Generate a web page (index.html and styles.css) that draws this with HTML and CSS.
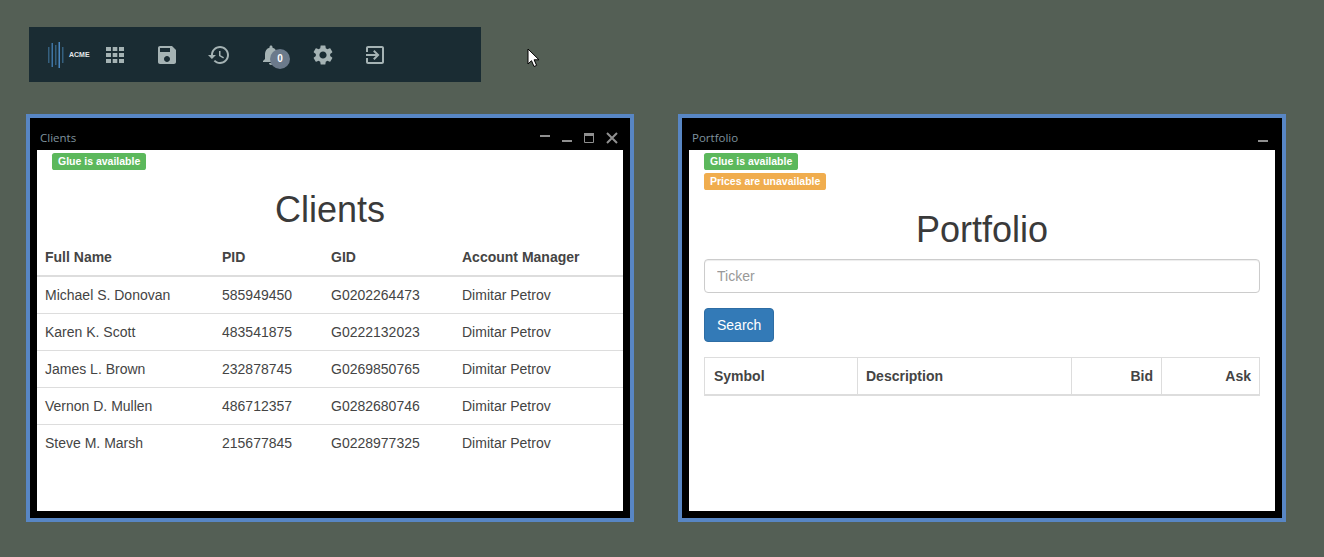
FILE: index.html
```html
<!DOCTYPE html>
<html>

<head>
    <title>Desktop</title>
    <link rel="stylesheet" href="styles.css">
</head>

<body>
    <div class="toolbar">
        <div class="logo">
            <svg class="logoBars" width="17" height="26" viewBox="0 0 17 26">
                <rect x="0" y="5" width="1.500" height="16" fill="#35607f"/>
                <rect x="3.500" y="1" width="1.500" height="24" fill="#3f75a5"/>
                <rect x="7" y="3" width="1.500" height="20" fill="#35607f"/>
                <rect x="10.500" y="0" width="1.500" height="26" fill="#4a86c0"/>
                <rect x="14" y="5" width="1.500" height="16" fill="#35607f"/>
            </svg>
            <span class="logoText">ACME</span>
        </div>
        <div class="icones">
            <svg class="icone" viewBox="0 0 24 24"><path d="M3 4h5v4H3zM9.700 4h4.600v4H9.700zM16 4h5v4h-5zM3 10h5v4H3zM9.700 10h4.600v4H9.700zM16 10h5v4h-5zM3 16h5v4H3zM9.700 16h4.600v4H9.700zM16 16h5v4h-5z"/></svg>
            <svg class="icone" viewBox="0 0 24 24"><path d="M17 3H5c-1.110 0-2 .9-2 2v14c0 1.100.89 2 2 2h14c1.100 0 2-.9 2-2V7l-4-4zm-5 16c-1.660 0-3-1.340-3-3s1.340-3 3-3 3 1.340 3 3-1.340 3-3 3zm3-10H5V5h10v4z"/></svg>
            <svg class="icone" viewBox="0 0 24 24"><path d="M13 3c-4.970 0-9 4.030-9 9H1l3.890 3.890.07.14L9 12H6c0-3.870 3.130-7 7-7s7 3.130 7 7-3.130 7-7 7c-1.930 0-3.680-.79-4.940-2.060l-1.420 1.420C8.270 19.990 10.510 21 13 21c4.970 0 9-4.030 9-9s-4.030-9-9-9zm-1 5v5l4.280 2.540.72-1.210-3.500-2.080V8H12z"/></svg>
            <div class="sino">
                <svg class="icone" viewBox="0 0 24 24"><path d="M12 22c1.100 0 2-.9 2-2h-4c0 1.100.89 2 2 2zm6-6v-5c0-3.070-1.640-5.640-4.500-6.320V4c0-.83-.67-1.500-1.500-1.500s-1.500.67-1.500 1.500v.68C7.630 5.360 6 7.920 6 11v5l-2 2v1h16v-1l-2-2z"/></svg>
                <span class="contador">0</span>
            </div>
            <svg class="icone" viewBox="0 0 24 24"><path d="M19.140 12.940c.04-.3.06-.61.06-.94 0-.32-.02-.64-.07-.94l2.030-1.580c.18-.14.23-.41.12-.61l-1.920-3.320c-.12-.22-.37-.29-.59-.22l-2.390.96c-.5-.38-1.030-.7-1.620-.94l-.36-2.540c-.04-.24-.24-.41-.48-.41h-3.840c-.24 0-.43.17-.47.41l-.36 2.540c-.59.24-1.130.57-1.620.94l-2.390-.96c-.22-.08-.47 0-.59.22L2.740 8.870c-.12.21-.08.47.12.61l2.030 1.580c-.05.3-.09.63-.09.94s.02.64.07.94l-2.030 1.580c-.18.14-.23.41-.12.61l1.920 3.320c.12.22.37.29.59.22l2.390-.96c.5.38 1.030.7 1.620.94l.36 2.540c.05.24.24.41.48.41h3.840c.24 0 .44-.17.47-.41l.36-2.540c.59-.24 1.130-.56 1.620-.94l2.390.96c.22.08.47 0 .59-.22l1.920-3.320c.12-.22.07-.47-.12-.61l-2.010-1.580zM12 15.600c-1.980 0-3.600-1.620-3.600-3.600s1.620-3.600 3.600-3.600 3.600 1.620 3.600 3.600-1.620 3.600-3.600 3.600z"/></svg>
            <svg class="icone" viewBox="0 0 24 24"><path d="M10.090 15.590L11.500 17l5-5-5-5-1.410 1.410L12.670 11H3v2h9.670l-2.580 2.590zM19 3H5c-1.110 0-2 .9-2 2v4h2V5h14v14H5v-4H3v4c0 1.100.89 2 2 2h14c1.100 0 2-.9 2-2V5c0-1.100-.9-2-2-2z"/></svg>
        </div>
    </div>

    <svg class="cursor" width="13" height="20" viewBox="0 0 13 20">
        <path d="M1 1v15l3.500-3.300 2.500 5.800 2.600-1.100-2.500-5.600h4.900z" fill="#fff" stroke="#000" stroke-width="1"/>
    </svg>

    <div class="janela janelaClientes">
        <div class="tituloJanela">
            <span class="nomeJanela">Clients</span>
            <div class="botoesJanela">
                <svg width="12" height="12" viewBox="0 0 12 12"><rect x="1" y="3" width="10" height="2" fill="#8f8f8f"/></svg>
                <svg width="12" height="12" viewBox="0 0 12 12"><rect x="1" y="8" width="10" height="2" fill="#8f8f8f"/></svg>
                <svg width="12" height="12" viewBox="0 0 12 12"><path d="M1.500 1.500h9v9h-9z" fill="none" stroke="#8f8f8f"/><rect x="1" y="1" width="10" height="3" fill="#8f8f8f"/></svg>
                <svg width="14" height="12" viewBox="0 0 14 12"><path d="M2 1l10 10M12 1L2 11" stroke="#8f8f8f" stroke-width="2" fill="none"/></svg>
            </div>
        </div>
        <div class="conteudo">
            <div class="etiquetas etiquetasClientes">
                <span class="etiqueta verde">Glue is available</span>
            </div>
            <h1>Clients</h1>
            <table class="tabelaClientes">
                <thead>
                    <tr>
                        <th class="colNome">Full Name</th>
                        <th class="colPid">PID</th>
                        <th class="colGid">GID</th>
                        <th>Account Manager</th>
                    </tr>
                </thead>
                <tbody>
                    <tr><td>Michael S. Donovan</td><td>585949450</td><td>G0202264473</td><td>Dimitar Petrov</td></tr>
                    <tr><td>Karen K. Scott</td><td>483541875</td><td>G0222132023</td><td>Dimitar Petrov</td></tr>
                    <tr><td>James L. Brown</td><td>232878745</td><td>G0269850765</td><td>Dimitar Petrov</td></tr>
                    <tr><td>Vernon D. Mullen</td><td>486712357</td><td>G0282680746</td><td>Dimitar Petrov</td></tr>
                    <tr><td>Steve M. Marsh</td><td>215677845</td><td>G0228977325</td><td>Dimitar Petrov</td></tr>
                </tbody>
            </table>
        </div>
    </div>

    <div class="janela janelaPortfolio">
        <div class="tituloJanela">
            <span class="nomeJanela">Portfolio</span>
            <div class="botoesJanela">
                <svg width="12" height="12" viewBox="0 0 12 12"><rect x="1" y="8" width="10" height="2" fill="#8f8f8f"/></svg>
            </div>
        </div>
        <div class="conteudo conteudoPortfolio">
            <div class="etiquetas">
                <span class="etiqueta verde">Glue is available</span>
                <span class="etiqueta laranja">Prices are unavailable</span>
            </div>
            <h1>Portfolio</h1>
            <input class="campoTicker" type="text" placeholder="Ticker">
            <button class="btnBusca">Search</button>
            <table class="tabelaPortfolio">
                <thead>
                    <tr>
                        <th class="colSimbolo">Symbol</th>
                        <th class="colDescricao">Description</th>
                        <th class="colBid">Bid</th>
                        <th class="colAsk">Ask</th>
                    </tr>
                </thead>
            </table>
        </div>
    </div>
</body>

</html>
```

FILE: styles.css
```css
* {
    box-sizing: border-box;
}

body {
    margin: 0;
    height: 557px;
    overflow: hidden;
    position: relative;
    background-color: #545f55;
    font-family: "Liberation Sans", Arial, sans-serif;
    font-size: 14px;
    color: #444;
}

/* barra de ferramentas */
.toolbar {
    position: absolute;
    left: 29px;
    top: 27px;
    width: 452px;
    height: 55px;
    background-color: #1a2c33;
    display: flex;
    align-items: center;
    padding-left: 19px;
}

.logo {
    display: flex;
    align-items: center;
    width: 55px;
}

.logoBars {
    display: block;
}

.logoText {
    margin-left: 4px;
    font-size: 7px;
    font-weight: bold;
    color: #e4e8ea;
}

.icones {
    display: flex;
    gap: 28px;
    align-items: center;
}

.icone {
    display: block;
    width: 24px;
    height: 24px;
    fill: #a5b3b4;
}

.sino {
    position: relative;
    width: 24px;
    height: 24px;
}

.contador {
    position: absolute;
    left: 11px;
    top: 6px;
    width: 20px;
    height: 20px;
    border-radius: 50%;
    background-color: #6b7a8b;
    color: #fff;
    font-size: 10px;
    font-weight: bold;
    line-height: 20px;
    text-align: center;
}

.cursor {
    position: absolute;
    left: 527px;
    top: 48px;
}

/* janelas */
.janela {
    position: absolute;
    top: 114px;
    width: 608px;
    height: 408px;
    border: 4px solid #5886c4;
    background-color: #000;
    display: flex;
    flex-direction: column;
    padding: 0 7px 7px;
}

.janelaClientes {
    left: 26px;
}

.janelaPortfolio {
    left: 678px;
}

.tituloJanela {
    height: 32px;
    flex-shrink: 0;
    display: flex;
    align-items: center;
    justify-content: space-between;
    padding: 6px 0 0 3px;
    margin-right: -4px;
}

.nomeJanela {
    font-family: "Open Sans", sans-serif;
    font-size: 11.500px;
    color: #7f929e;
}

.botoesJanela {
    display: flex;
    gap: 10px;
    align-items: center;
    margin-top: 2px;
    padding-right: 8px;
}

.janelaPortfolio .botoesJanela {
    padding-right: 10px;
}

.botoesJanela svg {
    display: block;
}

.conteudo {
    flex: 1;
    background-color: #fff;
}

.conteudoPortfolio {
    padding: 0 15px;
}

.etiquetas {
    display: flex;
    flex-direction: column;
    align-items: flex-start;
    gap: 3px;
    padding-top: 3px;
}

.etiquetasClientes {
    padding-left: 15px;
}

.etiqueta {
    display: block;
    height: 17px;
    padding: 0 6px;
    border-radius: 2.600px;
    font-size: 10.500px;
    font-weight: bold;
    line-height: 17px;
    color: #fff;
}

.verde {
    background-color: #5cb85c;
}

.laranja {
    background-color: #f0ad4e;
}

h1 {
    margin: 20px 0 9px;
    font-size: 36px;
    font-weight: 500;
    line-height: 40px;
    text-align: center;
    color: #3a3a3a;
}

table {
    border-collapse: collapse;
    table-layout: fixed;
    width: 100%;
}

.tabelaClientes th,
.tabelaClientes td {
    padding: 8px;
    line-height: 20px;
    text-align: left;
}

.tabelaClientes th {
    border-bottom: 2px solid #ddd;
}

.tabelaClientes td {
    border-top: 1px solid #ddd;
}

.colNome {
    width: 177px;
}

.colPid {
    width: 109px;
}

.colGid {
    width: 131px;
}

.campoTicker {
    display: block;
    width: 100%;
    height: 34px;
    padding: 6px 12px;
    border: 1px solid #ccc;
    border-radius: 4px;
    font-family: inherit;
    font-size: 14px;
    color: #555;
    box-shadow: inset 0 1px 1px rgba(0, 0, 0, .075);
}

.campoTicker::placeholder {
    color: #999;
}

.btnBusca {
    display: block;
    margin-top: 15px;
    height: 34px;
    padding: 6px 12px;
    border: 1px solid #2e6da4;
    border-radius: 4px;
    background-color: #337ab7;
    color: #fff;
    font-family: inherit;
    font-size: 14px;
}

.tabelaPortfolio {
    margin-top: 15px;
}

.tabelaPortfolio th {
    padding: 8px;
    line-height: 20px;
    text-align: left;
    border: 1px solid #ddd;
    border-bottom-width: 2px;
}

.tabelaPortfolio .colSimbolo {
    width: 153px;
    padding-left: 9px;
}

.colDescricao {
    width: 214px;
}

.colBid {
    width: 90px;
}

.tabelaPortfolio .colBid,
.tabelaPortfolio .colAsk {
    text-align: right;
}
```
